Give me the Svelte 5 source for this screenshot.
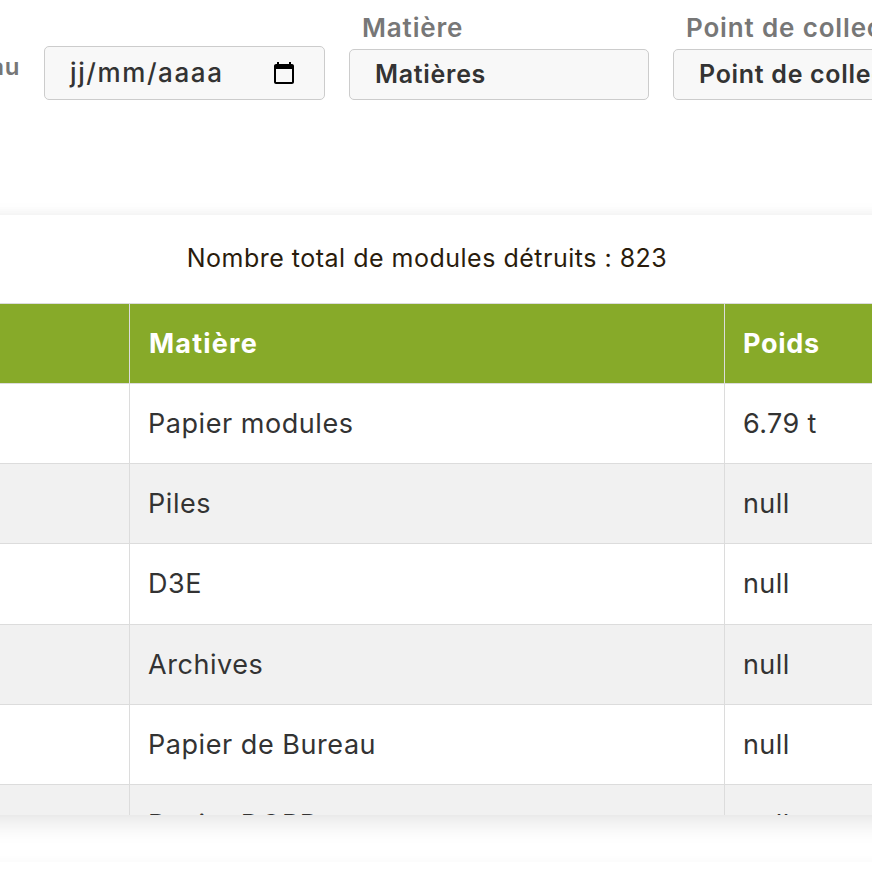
<script lang="ts">
  const rows = [
    { matiere: "Papier modules", poids: "6.79 t" },
    { matiere: "Piles", poids: "null" },
    { matiere: "D3E", poids: "null" },
    { matiere: "Archives", poids: "null" },
    { matiere: "Papier de Bureau", poids: "null" },
    { matiere: "Papier DOPP", poids: "null" },
  ];
</script>

<div class="page">
  <div class="filters">
    <span class="au">au</span>
    <div class="date-input">
      <span>jj/mm/aaaa</span>
      <svg width="24" height="24" viewBox="0 0 24 24">
        <path d="M20 3h-1V1h-2v2H7V1H5v2H4c-1.1 0-2 .9-2 2v16c0 1.1.9 2 2 2h16c1.1 0 2-.9 2-2V5c0-1.1-.9-2-2-2zm0 18H4V8h16v13z" />
      </svg>
    </div>
    <div class="field matiere">
      <label for="matiere">Matière</label>
      <div class="select" id="matiere"><span>Matières</span></div>
    </div>
    <div class="field point">
      <label for="point">Point de collecte</label>
      <div class="select" id="point"><span>Point de collecte</span></div>
    </div>
  </div>

  <div class="card">
    <div class="inner">
      <p class="total">Nombre total de modules détruits : 823</p>
      <div class="table-wrap">
        <table>
          <thead>
            <tr>
              <th class="c1"></th>
              <th class="c2">Matière</th>
              <th class="c3">Poids</th>
            </tr>
          </thead>
          <tbody>
            {#each rows as row}
              <tr>
                <td class="c1"></td>
                <td class="c2">{row.matiere}</td>
                <td class="c3">{row.poids}</td>
              </tr>
            {/each}
          </tbody>
        </table>
      </div>
    </div>
  </div>
  <div class="footer"></div>
</div>

<style>
:global(body) { background: #fff; overflow: hidden; }
.page {
  width: 872px;
  height: 872px;
  overflow: hidden;
  font-family: "Inter", "Noto Sans", sans-serif;
  color: #333;
}
.filters {
  display: flex;
  align-items: flex-end;
  gap: 24px;
  height: 100px;
  margin-left: -60px;
  width: 1400px;
}
.au { width: 80px; margin-right: -24px; text-align: right; font-size: 24px; font-weight: 600; color: #777; letter-spacing: .6px; line-height: 66px; }
.date-input {
  box-sizing: border-box;
  width: 281px;
  height: 54px;
  margin-left: 24px;
  padding: 0 28px 0 25px;
  display: flex;
  align-items: center;
  justify-content: space-between;
  background: #f8f8f8;
  border: 1px solid #ccc;
  border-radius: 5px;
  font-size: 26px;
  font-weight: 500;
  letter-spacing: 1.6px;
}
.date-input svg { margin-top: 0; }
.date-input span { margin-top: -2px; }
.field { display: flex; flex-direction: column; }
label { font-size: 26px; font-weight: 600; color: #777; margin-left: 13px; line-height: 30px; margin-bottom: 6px; letter-spacing: .85px; }
.select {
  box-sizing: border-box;
  height: 51px;
  padding: 0 25px;
  display: flex;
  align-items: center;
  background: #f8f8f8;
  border: 1px solid #ccc;
  border-radius: 5px;
  font-size: 25px;
  font-weight: 600;
  letter-spacing: .7px;
  white-space: nowrap;
}
.select span { margin-top: -2px; }
.matiere { width: 300px; }
.point { width: 300px; }

.card {
  margin: 115px -60px 0;
  height: 600px;
  background: #fff;
  box-shadow: 0 -2px 10px rgba(0, 0, 0, 0.03), 0 8px 22px rgba(0, 0, 0, 0.1);
  position: relative;
  overflow: hidden;
}
.inner { width: 872px; margin-left: 60px; }
.total {
  margin: 0;
  height: 88px;
  display: flex;
  align-items: center;
  justify-content: center;
  font-size: 25px;
  letter-spacing: .5px;
  color: #2a1c0c;
  padding: 0 18px 2px 0;
  box-sizing: border-box;
}
.table-wrap { overflow: hidden; height: 512px; }
table {
  border-collapse: collapse;
  table-layout: fixed;
  width: 1000px;
  margin-left: -1px;
  font-size: 27px;
  letter-spacing: .55px;
}
th {
  background: #87aa29;
  color: #fff;
  font-weight: 700;
  letter-spacing: 1.2px;
  text-align: left;
  height: 80px;
  padding: 0 18px 0 19px;
  border: 1px solid #dcdcdc;
  box-sizing: border-box;
}
td {
  height: 80.2px;
  padding: 0 18px;
  border: 1px solid #dcdcdc;
  box-sizing: border-box;
}
tbody tr:nth-child(even) td { background: #f1f1f1; }
.c1 { width: 130px; }
.c2 { width: 595px; }
.c3 { letter-spacing: .4px; }
th.c3 { padding-left: 18px; letter-spacing: .7px; }
.footer {
  margin: 47px -60px 0;
  height: 20px;
  background: #fff;
  box-shadow: 0 -2px 8px rgba(0, 0, 0, 0.025);
  position: relative;
}
</style>
